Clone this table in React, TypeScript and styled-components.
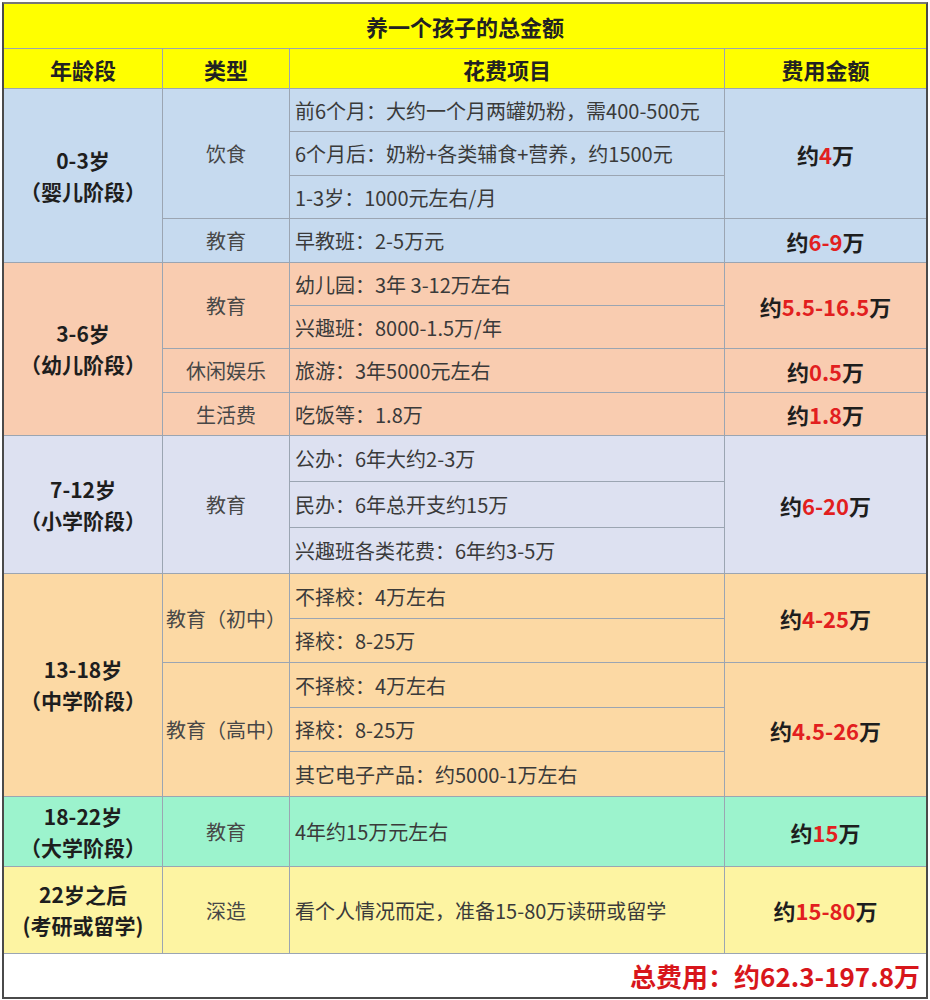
import React from 'react'
import styled, { createGlobalStyle } from 'styled-components'

const Global = createGlobalStyle`
  html, body {
    margin: 0;
    padding: 0;
    background: #ffffff;
  }
  body {
    font-family: 'Noto Sans CJK SC', 'Noto Sans', sans-serif;
    text-spacing-trim: space-all;
  }
`

const Page = styled.div`
  width: 930px;
  height: 1000px;
  padding: 2px;
  box-sizing: border-box;
`

const Table = styled.div`
  display: grid;
  grid-template-columns: 158px 126px 434px 1fr;
  grid-template-rows:
    44px 39px
    42px 43px 42px 43px
    42px 42px 43px 42px
    45px 45px 45px
    44px 43px 44px 43px 44px
    69px 86px 43px;
  gap: 1px;
  background: #9ba5b2;
  border: 2px solid #4a4a4a;
  border-top-color: #777;
  box-sizing: border-box;
  width: 926px;
`

type Place = { $bg: string; $row: number; $span?: number; $col: number }

const Cell = styled.div<Place>`
  grid-row: ${p => p.$row} / span ${p => p.$span ?? 1};
  grid-column: ${p => p.$col};
  background: ${p => p.$bg};
  display: flex;
  align-items: center;
  justify-content: center;
  white-space: nowrap;
`

const TitleCell = styled.div`
  grid-row: 1;
  grid-column: 1 / 5;
  background: #ffff00;
  display: flex;
  align-items: center;
  justify-content: center;
  font-size: 22px;
  font-weight: 700;
  color: #222;
`

const HeadCell = styled(Cell)`
  font-size: 22px;
  font-weight: 700;
  color: #222;
`

const AgeCell = styled(Cell)`
  flex-direction: column;
  font-size: 21px;
  font-weight: 700;
  color: #1e1e1e;
  line-height: 31px;
`

const TypeCell = styled(Cell)`
  font-size: 20px;
  color: #474747;
`

const ItemCell = styled(Cell)`
  justify-content: flex-start;
  padding-left: 5px;
  font-size: 20px;
  color: #3a3a3a;
`

const AmountCell = styled(Cell)`
  font-size: 22px;
  font-weight: 700;
  color: #1e1e1e;
`

const Red = styled.span`
  color: #e21f1f;
`

const TotalCell = styled.div`
  grid-row: 21;
  grid-column: 1 / 5;
  background: #ffffff;
  display: flex;
  align-items: center;
  justify-content: flex-end;
  padding-right: 6px;
  font-size: 26px;
  font-weight: 700;
  color: #d8161b;
`

const YELLOW = '#ffff00'
const BLUE = '#c6daef'
const SALMON = '#f9ccb0'
const LAVENDER = '#dde1f1'
const ORANGE = '#fcd9a4'
const MINT = '#9cf3cd'
const PALE = '#fdf4a2'

type Sub = { row: number; span: number; label: string }
type Group = {
  bg: string
  row: number
  span: number
  age: string
  stage: string
  types: Sub[]
  amounts: Sub[]
  items: string[]
}

const groups: Group[] = [
  {
    bg: BLUE,
    row: 3,
    span: 4,
    age: '0-3岁',
    stage: '（婴儿阶段）',
    types: [
      { row: 3, span: 3, label: '饮食' },
      { row: 6, span: 1, label: '教育' },
    ],
    amounts: [
      { row: 3, span: 3, label: '4' },
      { row: 6, span: 1, label: '6-9' },
    ],
    items: [
      '前6个月：大约一个月两罐奶粉，需400-500元',
      '6个月后：奶粉+各类辅食+营养，约1500元',
      '1-3岁：1000元左右/月',
      '早教班：2-5万元',
    ],
  },
  {
    bg: SALMON,
    row: 7,
    span: 4,
    age: '3-6岁',
    stage: '（幼儿阶段）',
    types: [
      { row: 7, span: 2, label: '教育' },
      { row: 9, span: 1, label: '休闲娱乐' },
      { row: 10, span: 1, label: '生活费' },
    ],
    amounts: [
      { row: 7, span: 2, label: '5.5-16.5' },
      { row: 9, span: 1, label: '0.5' },
      { row: 10, span: 1, label: '1.8' },
    ],
    items: ['幼儿园：3年 3-12万左右', '兴趣班：8000-1.5万/年', '旅游：3年5000元左右', '吃饭等：1.8万'],
  },
  {
    bg: LAVENDER,
    row: 11,
    span: 3,
    age: '7-12岁',
    stage: '（小学阶段）',
    types: [{ row: 11, span: 3, label: '教育' }],
    amounts: [{ row: 11, span: 3, label: '6-20' }],
    items: ['公办：6年大约2-3万', '民办：6年总开支约15万', '兴趣班各类花费：6年约3-5万'],
  },
  {
    bg: ORANGE,
    row: 14,
    span: 5,
    age: '13-18岁',
    stage: '（中学阶段）',
    types: [
      { row: 14, span: 2, label: '教育（初中）' },
      { row: 16, span: 3, label: '教育（高中）' },
    ],
    amounts: [
      { row: 14, span: 2, label: '4-25' },
      { row: 16, span: 3, label: '4.5-26' },
    ],
    items: ['不择校：4万左右', '择校：8-25万', '不择校：4万左右', '择校：8-25万', '其它电子产品：约5000-1万左右'],
  },
  {
    bg: MINT,
    row: 19,
    span: 1,
    age: '18-22岁',
    stage: '（大学阶段）',
    types: [{ row: 19, span: 1, label: '教育' }],
    amounts: [{ row: 19, span: 1, label: '15' }],
    items: ['4年约15万元左右'],
  },
  {
    bg: PALE,
    row: 20,
    span: 1,
    age: '22岁之后',
    stage: '(考研或留学)',
    types: [{ row: 20, span: 1, label: '深造' }],
    amounts: [{ row: 20, span: 1, label: '15-80' }],
    items: ['看个人情况而定，准备15-80万读研或留学'],
  },
]

const headers = ['年龄段', '类型', '花费项目', '费用金额']

const App = () => {
  return (
    <Page>
      <Global />
      <Table>
        <TitleCell>养一个孩子的总金额</TitleCell>
        {headers.map((h, i) => (
          <HeadCell key={h} $bg={YELLOW} $row={2} $col={i + 1}>
            {h}
          </HeadCell>
        ))}

        {groups.map(g => (
          <React.Fragment key={g.age}>
            <AgeCell $bg={g.bg} $row={g.row} $span={g.span} $col={1}>
              <div>{g.age}</div>
              <div>{g.stage}</div>
            </AgeCell>
            {g.types.map(t => (
              <TypeCell key={t.row} $bg={g.bg} $row={t.row} $span={t.span} $col={2}>
                {t.label}
              </TypeCell>
            ))}
            {g.items.map((text, i) => (
              <ItemCell key={i} $bg={g.bg} $row={g.row + i} $col={3}>
                {text}
              </ItemCell>
            ))}
            {g.amounts.map(a => (
              <AmountCell key={a.row} $bg={g.bg} $row={a.row} $span={a.span} $col={4}>
                约<Red>{a.label}</Red>万
              </AmountCell>
            ))}
          </React.Fragment>
        ))}

        <TotalCell>总费用：约62.3-197.8万</TotalCell>
      </Table>
    </Page>
  )
}

export default App
